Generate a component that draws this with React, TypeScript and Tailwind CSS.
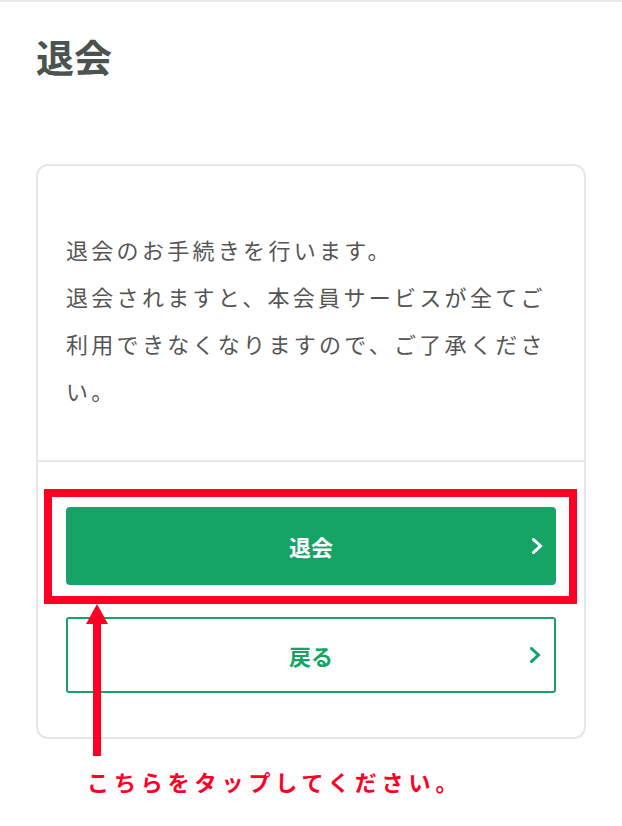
import React from 'react';

const font = { fontFamily: '"Noto Sans CJK JP", "Noto Sans", sans-serif' };

function Chevron({ color }: { color: string }) {
  return (
    <svg width="11" height="16" viewBox="0 0 11 16" fill="none" className="absolute right-[13px] top-1/2 -translate-y-1/2">
      <polyline points="1.5,1.5 8.5,8 1.5,14.5" stroke={color} strokeWidth="3" strokeLinecap="square" />
    </svg>
  );
}

export default function App() {
  return (
    <div className="relative w-full min-h-[826px] bg-white border-t-2 border-[#e8e8e8]" style={font}>
      {/* タイトル */}
      <h1 className="pl-[36px] pt-[35px] text-[38px] leading-none font-bold text-[#4b5350]">退会</h1>

      {/* カード */}
      <div className="mx-[36px] mt-[89px] border-2 border-[#e6e6e6] rounded-[12px]">
        <div className="px-[28px] pt-[60px] pb-[46px] text-[22px] leading-[47px] tracking-[0.15em] text-[#555555]">
          <p>退会のお手続きを行います。</p>
          <p>退会されますと、本会員サービスが全てご利用できなくなりますので、ご了承ください。</p>
        </div>
        <div className="border-t-2 border-[#e6e6e6] px-[28px] pt-[45px] pb-[44px] flex flex-col gap-[32px]">
          <div className="relative">
            <button className="relative w-full h-[78px] rounded-[4px] bg-[#16a366] text-white text-[22px] font-bold">
              退会
              <Chevron color="#ffffff" />
            </button>
            {/* 注釈の赤枠 */}
            <div className="absolute -left-[22px] -right-[21px] -top-[18px] -bottom-[19px] border-[8px] border-[#ff0024] pointer-events-none" />
          </div>
          <button className="relative w-full h-[76px] rounded-[3px] border-2 border-[#16a366] bg-white text-[#16a366] text-[22px] font-bold">
            戻る
            <Chevron color="#16a366" />
          </button>
        </div>
      </div>

      {/* 注釈 */}
      <p className="pl-[87px] mt-[26px] text-[22px] leading-[32px] tracking-[4.9px] font-bold text-[#ff0024]">
        こちらをタップしてください。
      </p>
      <svg width="22" height="152" viewBox="0 0 22 152" className="absolute left-[86px] top-[602px]">
        <polygon points="11,0 22,20 0,20" fill="#ff0024" />
        <rect x="7" y="19" width="8" height="133" fill="#ff0024" />
      </svg>
    </div>
  );
}
